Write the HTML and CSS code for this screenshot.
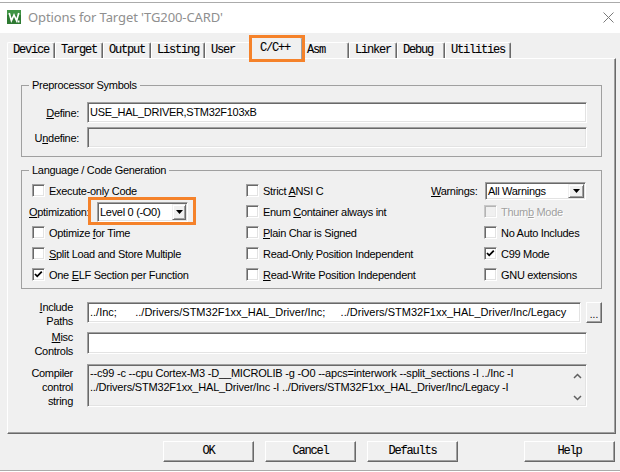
FILE: index.html
```html
<!DOCTYPE html>
<html>
<head>
<meta charset="utf-8">
<title>Options for Target</title>
<link rel="stylesheet" href="styles.css">
</head>
<body>
<div class="window">
  <div class="titlebar">
    <svg class="appicon" width="14" height="14" viewBox="0 0 14 14">
      <rect x="0" y="0" width="14" height="14" fill="#2e7a32"/>
      <rect x="0" y="0" width="14" height="5" fill="#3f9444"/>
      <path d="M2.2 3 L4.4 10.5 L7 5 L9.6 10.5 L11.8 3" fill="none" stroke="#fff" stroke-width="1.7"/>
      <rect x="10.5" y="10.5" width="2" height="2" fill="#fff"/>
    </svg>
    <span class="title">Options for Target 'TG200-CARD'</span>
    <svg class="close" width="11" height="11" viewBox="0 0 11 11">
      <path d="M0.5 0.5 L10.5 10.5 M10.5 0.5 L0.5 10.5" stroke="#7a7a7a" stroke-width="1" fill="none"/>
    </svg>
  </div>
  <div class="client">
    <div class="tabs">
      <div class="tab">Device</div>
      <div class="tab">Target</div>
      <div class="tab">Output</div>
      <div class="tab">Listing</div>
      <div class="tab">User</div>
      <div class="tab active">C/C++<span class="mark"></span></div>
      <div class="tab">Asm</div>
      <div class="tab">Linker</div>
      <div class="tab">Debug</div>
      <div class="tab">Utilities</div>
    </div>
    <div class="panel">
      <fieldset class="group pre">
        <legend>Preprocessor Symbols</legend>
        <div class="pre-body">
          <div class="frow">
            <span class="flabel"><u>D</u>efine:</span>
            <div class="edit">USE_HAL_DRIVER,STM32F103xB</div>
          </div>
          <div class="frow">
            <span class="flabel">U<u>n</u>define:</span>
            <div class="edit disabled"></div>
          </div>
        </div>
      </fieldset>

      <fieldset class="group lang">
        <legend>Language / Code Generation</legend>
        <div class="lang-body">
          <div class="col col1">
            <div class="row cbrow"><span class="cb"></span><span class="lbl">Execute-only Code</span></div>
            <div class="row">
              <span class="olabel"><u>O</u>ptimization:</span>
              <div class="combo combo-level">
                <span class="val">Level 0 (-O0)</span>
                <span class="drop"><svg width="7" height="4" viewBox="0 0 7 4"><path d="M0 0 H7 L3.5 4 Z" fill="#000"/></svg></span>
                <span class="mark mark-combo"></span>
              </div>
            </div>
            <div class="row cbrow"><span class="cb"></span><span class="lbl">Optimize <u>f</u>or Time</span></div>
            <div class="row cbrow"><span class="cb"></span><span class="lbl"><u>S</u>plit Load and Store Multiple</span></div>
            <div class="row cbrow"><span class="cb checked"><svg width="11" height="11" viewBox="0 0 11 11"><path d="M2 5 L4.2 7.3 L8.8 2.6" fill="none" stroke="#000" stroke-width="1.8"/></svg></span><span class="lbl">One <u>E</u>LF Section per Function</span></div>
          </div>
          <div class="col col2">
            <div class="row cbrow"><span class="cb"></span><span class="lbl">Strict <u>A</u>NSI C</span></div>
            <div class="row cbrow"><span class="cb"></span><span class="lbl">Enum <u>C</u>ontainer always int</span></div>
            <div class="row cbrow"><span class="cb"></span><span class="lbl"><u>P</u>lain Char is Signed</span></div>
            <div class="row cbrow"><span class="cb"></span><span class="lbl">Read-Onl<u>y</u> Position Independent</span></div>
            <div class="row cbrow"><span class="cb"></span><span class="lbl"><u>R</u>ead-Write Position Independent</span></div>
          </div>
          <div class="col col3">
            <div class="row">
              <span class="wlabel"><u>W</u>arnings:</span>
              <div class="combo combo-warn">
                <span class="val">All Warnings</span>
                <span class="drop"><svg width="7" height="4" viewBox="0 0 7 4"><path d="M0 0 H7 L3.5 4 Z" fill="#000"/></svg></span>
              </div>
            </div>
            <div class="row cbrow ind"><span class="cb disabled"></span><span class="lbl dis">Thum<u>b</u> Mode</span></div>
            <div class="row cbrow ind"><span class="cb"></span><span class="lbl">No Auto Includes</span></div>
            <div class="row cbrow ind"><span class="cb checked"><svg width="11" height="11" viewBox="0 0 11 11"><path d="M2 5 L4.2 7.3 L8.8 2.6" fill="none" stroke="#000" stroke-width="1.8"/></svg></span><span class="lbl">C99 Mode</span></div>
            <div class="row cbrow ind"><span class="cb"></span><span class="lbl">GNU extensions</span></div>
          </div>
        </div>
      </fieldset>

      <div class="lrow inc">
        <span class="llabel"><u>I</u>nclude<br>Paths</span>
        <div class="edit path">../Inc;      ../Drivers/STM32F1xx_HAL_Driver/Inc;     ../Drivers/STM32F1xx_HAL_Driver/Inc/Legacy</div>
        <span class="dots">...</span>
      </div>
      <div class="lrow misc">
        <span class="llabel"><u>M</u>isc<br>Controls</span>
        <div class="edit"></div>
      </div>
      <div class="lrow comp">
        <span class="llabel">Compiler<br>control<br>string</span>
        <div class="edit disabled multi">
          <div class="mtext">--c99 -c --cpu Cortex-M3 -D__MICROLIB -g -O0 --apcs=interwork --split_sections -I ../Inc -I<br>../Drivers/STM32F1xx_HAL_Driver/Inc -I ../Drivers/STM32F1xx_HAL_Driver/Inc/Legacy -I</div>
          <div class="vscroll">
            <svg width="9" height="6" viewBox="0 0 9 6"><path d="M1 5 L4.5 1.5 L8 5" fill="none" stroke="#606060" stroke-width="1.5"/></svg>
            <svg width="9" height="6" viewBox="0 0 9 6"><path d="M1 1 L4.5 4.5 L8 1" fill="none" stroke="#606060" stroke-width="1.5"/></svg>
          </div>
        </div>
      </div>
    </div>
    <div class="buttons">
      <div class="btn">OK</div>
      <div class="btn">Cancel</div>
      <div class="btn">Defaults</div>
      <div class="btn help">Help</div>
    </div>
  </div>
</div>
</body>
</html>
```

FILE: styles.css
```css
* { box-sizing: border-box; }

body {
  margin: 0;
  width: 620px;
  height: 472px;
  overflow: hidden;
  background: #fff;
  font-family: "Liberation Sans", Arial, sans-serif;
  font-size: 11px;
  letter-spacing: -0.3px;
  color: #000;
}

u { text-decoration: underline; text-underline-offset: 1px; }

.window {
  margin-top: 2px;
  border-top: 1px solid #ababab;
  border-bottom: 1px solid #ababab;
}

.titlebar {
  height: 30px;
  display: flex;
  align-items: center;
  padding: 0 0 2px 7px;
  background: #fff;
}
.appicon { display: block; flex: none; }
.title {
  margin-left: 7px;
  font-family: "Noto Sans", sans-serif;
  font-size: 13px;
  letter-spacing: -0.1px;
  color: #8f8f8f;
  line-height: 16px;
}
.close { display: block; margin-left: auto; margin-right: 6px; }

.client {
  background: #f0f0f0;
  height: 437px;
  padding: 4px 4px 0 7px;
}

/* tabs */
.tabs {
  display: flex;
  align-items: flex-end;
  height: 21px;
  position: relative;
  z-index: 1;
}
.tab {
  height: 16px;
  min-width: 48px;
  padding: 1px 5px 0;
  font-family: "Liberation Mono", monospace;
  font-size: 12px;
  letter-spacing: -1.2px;
  line-height: 13px;
  white-space: nowrap;
  background: #f0f0f0;
  border-top: 1px solid #fff;
  border-left: 1px solid #fff;
  border-right: 1px solid #696969;
  box-shadow: inset -1px 0 #a0a0a0;
  border-radius: 2px 2px 0 0;
  -webkit-text-stroke: 0.1px #000;
}
.tab.active {
  position: relative;
  z-index: 2;
  height: 22px;
  min-width: 52px;
  margin: 0 -2px -1px;
  padding: 3px 0 0 8px;
  line-height: 14px;
}
.mark {
  position: absolute;
  inset: -3px;
  border: 3px solid #f5822a;
  pointer-events: none;
}

/* panel */
.panel {
  height: 376px;
  border: 1px solid;
  border-color: #fff #696969 #696969 #fff;
  box-shadow: inset -1px -1px #a0a0a0;
  padding: 0 13px;
}

.group {
  margin: 0;
  padding: 0;
  border: 1px solid #a0a0a0;
  min-inline-size: 0;
}
.group legend {
  margin-left: 7px;
  padding: 0 3px;
  line-height: 13px;
  height: 13px;
}
.pre { margin-top: 20px; }
.pre-body {
  padding: 10px 14px 8px 0;
  display: flex;
  flex-direction: column;
  gap: 4px;
}
.frow {
  display: flex;
  align-items: center;
  height: 21px;
}
.flabel {
  width: 57px;
  text-align: right;
  margin-right: 8px;
  flex: none;
}

.edit {
  flex: 1;
  height: 21px;
  border: 1px solid;
  border-color: #a0a0a0 #fff #fff #a0a0a0;
  box-shadow: inset 1px 1px #696969, inset -1px -1px #e3e3e3;
  background: #fff;
  padding: 0 2px 0 2px;
  line-height: 19px;
  white-space: pre;
  overflow: hidden;
}
.edit.disabled { background: #f0f0f0; }
.edit.path { letter-spacing: 0; }

.lang { margin-top: 7px; }
.lang-body {
  display: flex;
  padding: 3px 0 3px 7px;
}
.col { display: flex; flex-direction: column; }
.col1 { width: 217px; }
.col2 { width: 185px; }
.col3 { flex: 1; }
.row {
  display: flex;
  align-items: center;
  height: 21px;
  white-space: nowrap;
}
.col1 .cbrow { padding-left: 3px; }
.col3 .ind { padding-left: 53px; }

.cb {
  width: 13px;
  height: 13px;
  flex: none;
  border: 1px solid;
  border-color: #a0a0a0 #fff #fff #a0a0a0;
  box-shadow: inset 1px 1px #696969, inset -1px -1px #e3e3e3;
  background: #fff;
  margin-right: 4px;
  display: flex;
  align-items: center;
  justify-content: center;
}
.cb svg { display: block; }
.cb.disabled {
  background: #f0f0f0;
  border-color: #c8c8c8 #fff #fff #c8c8c8;
  box-shadow: inset 1px 1px #b4b4b4, inset -1px -1px #e8e8e8;
}
.lbl.dis { color: #a0a0a0; text-shadow: 1px 1px 0 #fff; }

.olabel { width: 68px; flex: none; }
.wlabel { width: 54px; flex: none; }

.combo {
  position: relative;
  display: flex;
  align-items: stretch;
  border: 1px solid;
  border-color: #a0a0a0 #fff #fff #a0a0a0;
  box-shadow: inset 1px 1px #696969, inset -1px -1px #e3e3e3;
  background: #fff;
  padding: 1px;
}
.combo-level { width: 91px; height: 20px; }
.combo-warn { width: 101px; height: 18px; }
.combo .val {
  flex: 1;
  padding-left: 1px;
  display: flex;
  align-items: center;
}
.combo .drop {
  width: 14px;
  flex: none;
  background: #f0f0f0;
  border: 1px solid;
  border-color: #f0f0f0 #696969 #696969 #f0f0f0;
  box-shadow: inset 1px 1px #fff, inset -1px -1px #a0a0a0;
  display: flex;
  align-items: center;
  justify-content: center;
}
.combo-warn .drop { width: 16px; }
.combo .drop svg { display: block; }
.mark-combo {
  inset: auto;
  left: -10px;
  right: -9px;
  top: -6px;
  bottom: -4px;
}

/* bottom rows */
.lrow {
  display: flex;
  align-items: flex-start;
}
.llabel {
  width: 52px;
  flex: none;
  margin-right: 14px;
  text-align: right;
  line-height: 14px;
}
.inc { margin-top: 13px; margin-right: 0; height: 21px; }
.inc .llabel { margin-top: -2px; margin-bottom: -5px; }
.inc .edit { height: 21px; }
.dots {
  width: 16px;
  height: 21px;
  flex: none;
  margin-left: 5px;
  border: 1px solid;
  border-color: #fff #696969 #696969 #fff;
  box-shadow: inset -1px -1px #a0a0a0;
  background: #f0f0f0;
  text-align: center;
  line-height: 24px;
  letter-spacing: 0;
  font-size: 10px;
}
.misc { margin-top: 9px; margin-right: 15px; height: 22px; }
.misc .llabel { margin-top: -2px; margin-bottom: -4px; }
.misc .edit { height: 22px; }
.comp { margin-top: 10px; margin-right: 15px; height: 43px; }
.comp .llabel { margin-top: 2px; margin-bottom: -1px; }
.edit.multi {
  height: 43px;
  display: flex;
  padding: 1px 1px 1px 2px;
  white-space: nowrap;
}
.mtext {
  flex: 1;
  line-height: 14px;
  overflow: hidden;
  letter-spacing: -0.2px;
}
.vscroll {
  width: 15px;
  flex: none;
  display: flex;
  flex-direction: column;
  align-items: center;
  justify-content: space-between;
  padding: 7px 0 4px;
}
.vscroll svg { display: block; }

/* buttons */
.buttons {
  display: flex;
  margin-top: 7px;
  padding-left: 156px;
  gap: 11px;
}
.btn {
  width: 91px;
  height: 21px;
  border: 1px solid;
  border-color: #fff #696969 #696969 #fff;
  box-shadow: inset -1px -1px #a0a0a0;
  background: #f0f0f0;
  font-family: "Liberation Mono", monospace;
  font-size: 12px;
  letter-spacing: -1.2px;
  line-height: 19px;
  text-align: center;
  -webkit-text-stroke: 0.1px #000;
}
.btn.help { margin-left: auto; margin-right: 1px; }
```
